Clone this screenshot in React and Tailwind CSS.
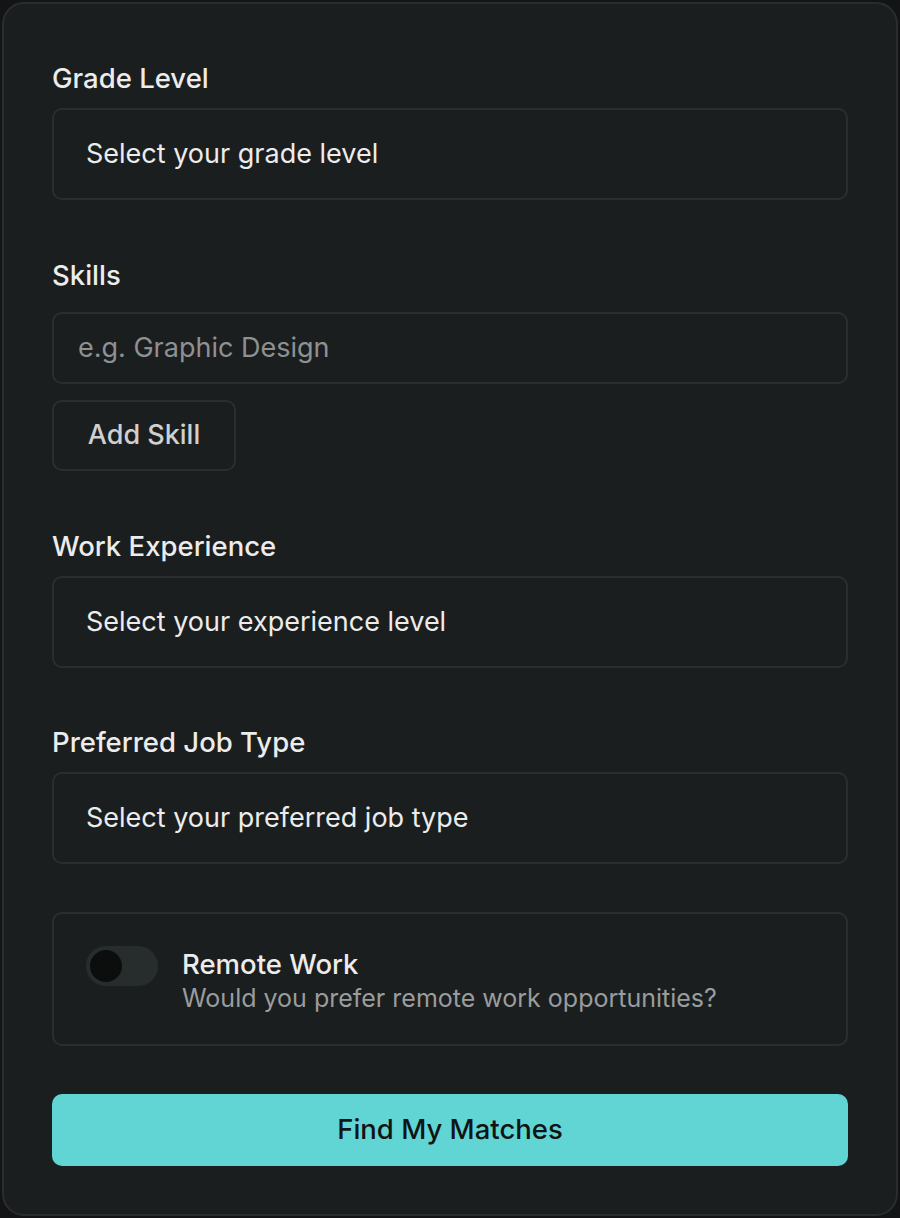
export default function App() {
  const label = "block text-[27.5px] leading-[32px] font-medium text-[#ececec]";
  const select =
    "flex items-center h-[92px] rounded-[10px] border-2 border-[#2a2e30] px-[32px] text-[27px] text-[#ececec]";
  return (
    <div className="w-[900px] h-[1218px] bg-[#121415] p-[2px]" style={{ fontFamily: "Inter, 'Noto Sans', sans-serif" }}>
      <div className="h-full rounded-[22px] border-2 border-[#2a2d2f] bg-[#1b1e1f] px-[48px] pt-[58px]">
        <label className={label}>Grade Level</label>
        <div className={`${select} mt-[14px]`}>Select your grade level</div>

        <label className={`${label} mt-[59px]`}>Skills</label>
        <div className="mt-[21px] flex h-[72px] items-center rounded-[10px] border-2 border-[#2a2e30] px-[24px] text-[27px] text-[#8e9192]">
          e.g. Graphic Design
        </div>
        <div className="mt-[16px] flex h-[71px] w-[184px] items-center justify-center rounded-[10px] border-2 border-[#2a2e30] text-[27px] font-medium text-[#cfd0d0]">
          Add Skill
        </div>

        <label className={`${label} mt-[59px]`}>Work Experience</label>
        <div className={`${select} mt-[14px]`}>Select your experience level</div>

        <label className={`${label} mt-[58px]`}>Preferred Job Type</label>
        <div className={`${select} mt-[14px]`}>Select your preferred job type</div>

        <div className="mt-[48px] flex h-[134px] items-start rounded-[10px] border-2 border-[#2a2e30] pl-[32px] pt-[32px]">
          <div className="flex h-[40px] w-[72px] items-center rounded-full bg-[#272c2d] px-[4px]">
            <div className="h-[32px] w-[32px] rounded-full bg-[#0c0e0e]"></div>
          </div>
          <div className="ml-[24px] mt-[1px]">
            <div className="text-[27.5px] leading-[34px] font-medium text-[#ececec]">Remote Work</div>
            <div className="text-[25px] leading-[34px] text-[#9a9c9d]">Would you prefer remote work opportunities?</div>
          </div>
        </div>

        <div className="mt-[48px] flex h-[72px] items-center justify-center rounded-[10px] bg-[#61d4d4] text-[27.5px] font-medium text-[#111414]">
          Find My Matches
        </div>
      </div>
    </div>
  );
}
